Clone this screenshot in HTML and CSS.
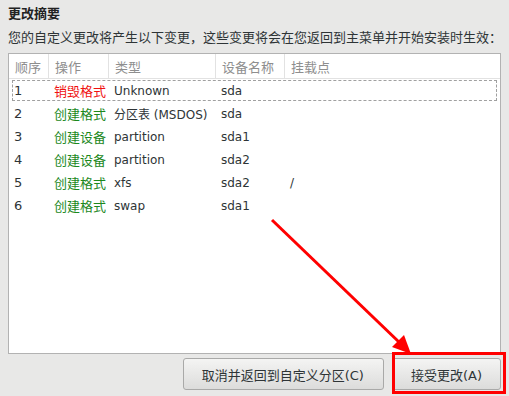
FILE: index.html
```html
<!DOCTYPE html>
<html lang="zh-CN">
<head>
    <meta charset="UTF-8">
    <title>更改摘要</title>
    <link rel="stylesheet" href="styles.css">
</head>
<body>
    <div class="page">
        <h1 class="title">更改摘要</h1>
        <p class="desc">您的自定义更改将产生以下变更，这些变更将会在您返回到主菜单并开始安装时生效：</p>

        <div class="table">
            <div class="row head">
                <div class="cell">顺序</div>
                <div class="cell">操作</div>
                <div class="cell">类型</div>
                <div class="cell">设备名称</div>
                <div class="cell">挂载点</div>
            </div>
            <div class="row focus">
                <div class="cell">1</div>
                <div class="cell destroy">销毁格式</div>
                <div class="cell lat">Unknown</div>
                <div class="cell lat">sda</div>
                <div class="cell lat"></div>
            </div>
            <div class="row">
                <div class="cell">2</div>
                <div class="cell create">创建格式</div>
                <div class="cell lat">分区表 (MSDOS)</div>
                <div class="cell lat">sda</div>
                <div class="cell lat"></div>
            </div>
            <div class="row">
                <div class="cell">3</div>
                <div class="cell create">创建设备</div>
                <div class="cell lat">partition</div>
                <div class="cell lat">sda1</div>
                <div class="cell lat"></div>
            </div>
            <div class="row">
                <div class="cell">4</div>
                <div class="cell create">创建设备</div>
                <div class="cell lat">partition</div>
                <div class="cell lat">sda2</div>
                <div class="cell lat"></div>
            </div>
            <div class="row">
                <div class="cell">5</div>
                <div class="cell create">创建格式</div>
                <div class="cell lat">xfs</div>
                <div class="cell lat">sda2</div>
                <div class="cell lat">/</div>
            </div>
            <div class="row">
                <div class="cell">6</div>
                <div class="cell create">创建格式</div>
                <div class="cell lat">swap</div>
                <div class="cell lat">sda1</div>
                <div class="cell lat"></div>
            </div>
        </div>

        <div class="actions">
            <button class="btn btn-cancel">取消并返回到自定义分区(C)</button>
            <button class="btn">接受更改(A)</button>
        </div>
    </div>

    <svg class="annot" width="509" height="396" viewBox="0 0 509 396">
        <line x1="272" y1="220" x2="400" y2="343" stroke="#ff0000" stroke-width="3"/>
        <polygon points="411,354 392,347 404,335" fill="#ff0000"/>
        <rect x="393.5" y="353.5" width="111" height="39" fill="none" stroke="#ff0000" stroke-width="3"/>
    </svg>
</body>
</html>
```

FILE: styles.css
```css
* {
    box-sizing: border-box;
}

body {
    margin: 0;
    background-color: #e8e8e7;
    font-family: "DejaVu Sans", "Noto Sans CJK SC", sans-serif;
    font-size: 13px;
    color: #2e3436;
}

.page {
    height: 396px;
    padding: 5px 8px 6px;
    display: flex;
    flex-direction: column;
}

.title {
    margin: 0;
    font-size: 13px;
    font-weight: bold;
    line-height: 18px;
    color: #222;
}

.desc {
    margin: 5px 0 7px;
    line-height: 18px;
    white-space: nowrap;
    font-family: "Noto Sans CJK SC", sans-serif;
}

.table {
    flex: 1;
    background-color: #ffffff;
    border: 1px solid #b2b2b2;
}

.row {
    display: grid;
    grid-template-columns: 40px 60px 107px 69px 1fr;
    height: 23px;
    align-items: center;
}

.row.head {
    height: 25px;
    border-bottom: 1px solid #e2e2e2;
    color: #8e8e8e;
}

.row.head .cell {
    height: 100%;
    display: flex;
    align-items: center;
    border-right: 1px solid #e2e2e2;
    padding-left: 6px;
}

.row.head .cell:last-child {
    border-right: none;
}

.row.focus {
    outline: 1px dashed #a0a0a0;
    outline-offset: -2px;
    margin: 0 2px;
    grid-template-columns: 38px 60px 107px 69px 1fr;
}

.cell {
    padding-left: 5px;
    white-space: nowrap;
}

.row.focus .cell:first-child {
    padding-left: 3px;
}

.lat {
    font-size: 12px;
}

.destroy {
    color: #f01010;
}

.create {
    color: #1c881c;
}

.actions {
    display: flex;
    justify-content: flex-end;
    gap: 8px;
    margin-top: 4px;
}

.btn {
    height: 32px;
    padding: 0 18px;
    font-family: inherit;
    font-size: 13px;
    color: #2e3436;
    background: linear-gradient(#f4f4f3, #dcdcdb);
    border: 1px solid #a9a9a8;
    border-radius: 3px;
}

.btn-cancel {
    padding: 0 19px 0 18px;
}

.annot {
    position: absolute;
    left: 0;
    top: 0;
    pointer-events: none;
}
```
